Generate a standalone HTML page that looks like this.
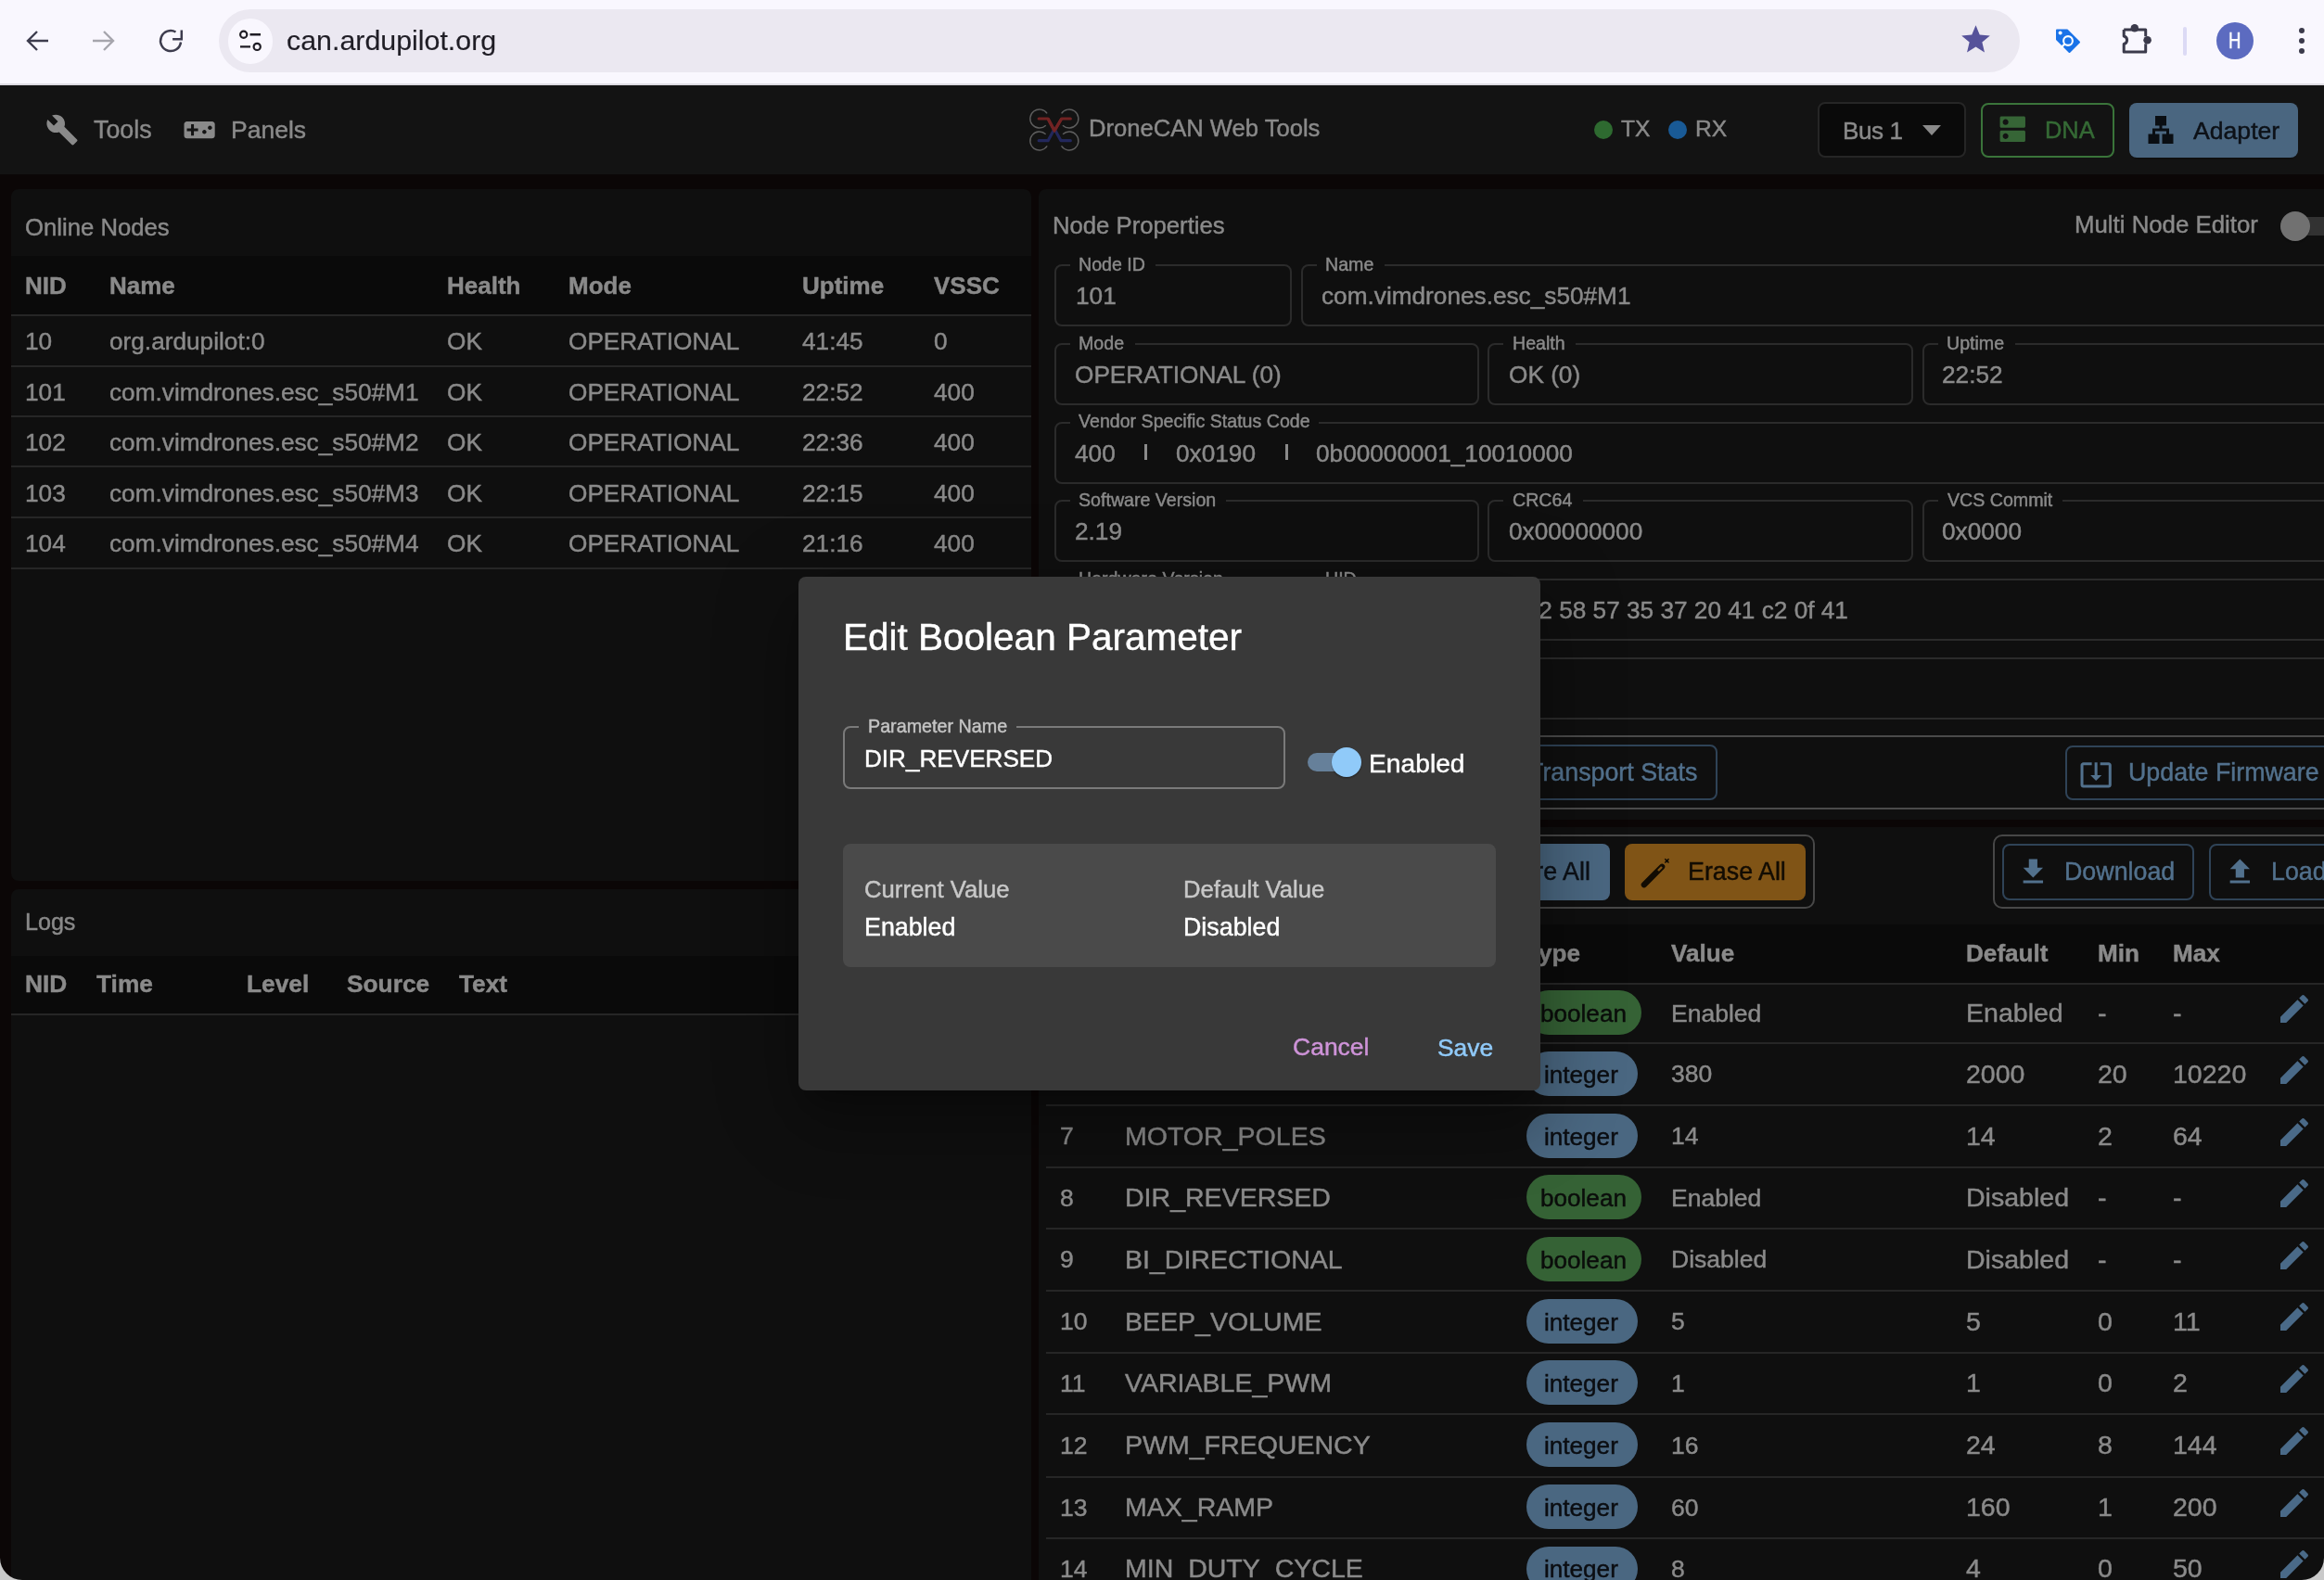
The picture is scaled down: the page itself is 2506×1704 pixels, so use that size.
<!DOCTYPE html>
<html><head><meta charset="utf-8"><title>DroneCAN Web Tools</title>
<style>
html,body{margin:0;padding:0;}
body{width:2506px;height:1704px;overflow:hidden;position:relative;background:#0b0606;font-family:"Liberation Sans", sans-serif;}
.t{position:absolute;white-space:nowrap;font-family:"Liberation Sans", sans-serif;-webkit-text-stroke:0.45px currentColor;will-change:transform;}
.r{position:absolute;}
</style></head><body>
<div class="r" style="left:0.0px;top:0.0px;width:2506.0px;height:91.0px;background:#f9f7fe;"></div><div class="r" style="left:0.0px;top:90.0px;width:2506.0px;height:2.0px;background:#dddbe2;"></div><svg class="r" style="left:26.0px;top:30.0px;" width="28.0" height="28.0" viewBox="0 0 28 28"><path d="M26 14H4M14 4L4 14l10 10" fill="none" stroke="#3d3c4e" stroke-width="2.4"/></svg><svg class="r" style="left:98.0px;top:30.0px;" width="28.0" height="28.0" viewBox="0 0 28 28"><path d="M2 14h22M14 4l10 10-10 10" fill="none" stroke="#a6a5ad" stroke-width="2.4"/></svg><svg class="r" style="left:170.0px;top:30.0px;" width="28.0" height="28.0" viewBox="0 0 28 28"><path d="M25 15.5A11 11 0 1 1 19.5 4.5" fill="none" stroke="#3d3c4e" stroke-width="2.5"/><path d="M25.8 2.5v9.7h-9.7" fill="none" stroke="#3d3c4e" stroke-width="2.5"/></svg><div class="r" style="left:236.0px;top:10.0px;width:1942.0px;height:68.0px;background:#ebe8f1;border-radius:34px"></div><div class="r" style="left:245.5px;top:20.0px;width:48.5px;height:48.5px;background:#f9f7fe;border-radius:50%"></div><svg class="r" style="left:256.0px;top:30.0px;" width="28.0" height="28.0" viewBox="0 0 28 28"><circle cx="6.7" cy="7.2" r="3.6" fill="none" stroke="#1f1d25" stroke-width="2.2"/><path d="M13.5 7.2h11.5M3 20.4h11" stroke="#1f1d25" stroke-width="2.4"/><circle cx="21.2" cy="20.4" r="3.6" fill="none" stroke="#1f1d25" stroke-width="2.2"/></svg><div class="t" style="left:309.4px;top:28.6px;font-size:30.36px;line-height:30.36px;color:#1f1d25;font-weight:400;-webkit-text-stroke:0.15px currentColor">can.ardupilot.org</div><svg class="r" style="left:2112.5px;top:24.3px;" width="35.0" height="35.0" viewBox="0 0 24 24"><path d="M12 2.2l2.9 7.1 7.6.6-5.8 4.9 1.8 7.4L12 18.2l-6.5 4 1.8-7.4-5.8-4.9 7.6-.6z" fill="#56529a"/></svg><svg class="r" style="left:2215.0px;top:29.0px;" width="30.0" height="30.0" viewBox="0 0 30 30"><path d="M3 3.5h11l13 13-10.5 10.5-13.5-13.5z" fill="#1a73e8" stroke="#1a73e8" stroke-width="2" stroke-linejoin="round"/><circle cx="6.6" cy="6.4" r="2" fill="#fff"/><circle cx="15" cy="15" r="4.9" fill="none" stroke="#fff" stroke-width="2.1"/><path d="M11.2 18.6L7.6 22.2" stroke="#fff" stroke-width="2.2"/></svg><svg class="r" style="left:2280.0px;top:20.0px;" width="44.0" height="44.0" viewBox="0 0 44 44"><path d="M10.2 12.1H33.7V19.2M33.7 27.2V36H10.2V27.4A4.3 4.3 0 0 0 10.2 19V12.1" fill="none" stroke="#3b3a4b" stroke-width="3" stroke-linejoin="round"/><circle cx="21.8" cy="10.3" r="4.2" fill="#3b3a4b"/><circle cx="35.6" cy="23.2" r="4.3" fill="#3b3a4b"/></svg><div class="r" style="left:2354.3px;top:28.5px;width:3.5px;height:31.0px;background:#dcdaf5;border-radius:2px"></div><div class="r" style="left:2390.0px;top:24.0px;width:40.0px;height:40.0px;background:#5c6bc0;border-radius:50%"></div><div class="t" style="left:2402.8px;top:32.7px;font-size:23.28px;line-height:23.28px;color:#ffffff;font-weight:400;transform:scaleX(0.8);transform-origin:0 0">H</div><div class="r" style="left:2479.0px;top:29.7px;width:6.0px;height:6.0px;background:#3b3a4b;border-radius:50%"></div><div class="r" style="left:2479.0px;top:41.0px;width:6.0px;height:6.0px;background:#3b3a4b;border-radius:50%"></div><div class="r" style="left:2479.0px;top:52.3px;width:6.0px;height:6.0px;background:#3b3a4b;border-radius:50%"></div><div class="r" style="left:0.0px;top:92.0px;width:2506.0px;height:96.0px;background:#131313;"></div><svg class="r" style="left:49.3px;top:121.7px;" width="36.0" height="36.0" viewBox="0 0 24 24"><path fill="#8a8a8a" d="M22.7 19l-9.1-9.1c.9-2.3.4-5-1.5-6.9-2-2-5-2.4-7.4-1.3L9 6 6 9 1.6 4.7C.4 7.1.9 10.1 2.9 12.1c1.9 1.9 4.6 2.4 6.9 1.5l9.1 9.1c.4.4 1 .4 1.4 0l2.3-2.3c.5-.4.5-1.1.1-1.4z"/></svg><div class="t" style="left:100.7px;top:126.9px;font-size:26.82px;line-height:26.82px;color:#8a8a8a;font-weight:400;">Tools</div><svg class="r" style="left:196.8px;top:122.3px;" width="36.2" height="36.2" viewBox="0 0 24 24"><path fill="#8a8a8a" d="M21 6H3c-1.1 0-2 .9-2 2v8c0 1.1.9 2 2 2h18c1.1 0 2-.9 2-2V8c0-1.1-.9-2-2-2zm-10 7H8v3H6v-3H3v-2h3V8h2v3h3v2zm4.5 2c-.83 0-1.5-.67-1.5-1.5s.67-1.5 1.5-1.5 1.5.67 1.5 1.5-.67 1.5-1.5 1.5zm4-3c-.83 0-1.5-.67-1.5-1.5S18.67 9 19.5 9s1.5.67 1.5 1.5-.67 1.5-1.5 1.5z"/></svg><div class="t" style="left:249.4px;top:127.1px;font-size:26.51px;line-height:26.51px;color:#8a8a8a;font-weight:400;">Panels</div><svg class="r" style="left:1106.0px;top:113.0px;" width="62.0" height="54.0" viewBox="0 0 62 54"><g fill="none" stroke="#5e5e5e" stroke-width="1.4"><path d="M21.75 22.19A10 10 0 1 1 23.09 9.41"/><path d="M38.61 9.41A10 10 0 1 1 39.95 22.19"/><path d="M23.19 44.45A10 10 0 1 1 21.62 31.69"/><path d="M40.08 31.69A10 10 0 1 1 38.51 44.45"/></g><path d="M14.200000000000045 15H24.09999999999991L31 28L38.700000000000045 15H48.299999999999955" fill="none" stroke="#722323" stroke-width="3.2" stroke-linecap="round" stroke-linejoin="round"/><path d="M14.200000000000045 38.69999999999999H24.09999999999991L31 26" fill="none" stroke="#23285c" stroke-width="3.2" stroke-linecap="round" stroke-linejoin="round"/><path d="M31 26L38 38.69999999999999H48.299999999999955" fill="none" stroke="#23285c" stroke-width="3.2" stroke-linecap="round" stroke-linejoin="round"/><path d="M24.09999999999991 15L31 28L38.700000000000045 15" fill="none" stroke="#722323" stroke-width="3.2" stroke-linejoin="round"/></svg><div class="t" style="left:1173.7px;top:126.4px;font-size:25.6px;line-height:25.6px;color:#8a8a8a;font-weight:400;">DroneCAN Web Tools</div><div class="r" style="left:1718.5px;top:130.0px;width:20.0px;height:20.0px;background:#2e6a30;border-radius:50%"></div><div class="t" style="left:1747.5px;top:127.2px;font-size:24.59px;line-height:24.59px;color:#8a8a8a;font-weight:400;">TX</div><div class="r" style="left:1798.6px;top:130.0px;width:20.0px;height:20.0px;background:#195a96;border-radius:50%"></div><div class="t" style="left:1827.6px;top:127.2px;font-size:24.59px;line-height:24.59px;color:#8a8a8a;font-weight:400;">RX</div><div class="r" style="left:1960.0px;top:109.5px;width:159.5px;height:60.0px;background:#0a0a0a;border:2px solid #262626;border-radius:8px;box-sizing:border-box"></div><div class="t" style="left:1986.7px;top:127.7px;font-size:26.11px;line-height:26.11px;color:#8a8a8a;font-weight:400;letter-spacing:-0.45px">Bus 1</div><svg class="r" style="left:2073.0px;top:135.0px;" width="20.0" height="11.0" viewBox="0 0 20 11"><path d="M0 0h20L10 11z" fill="#8a8a8a"/></svg><div class="r" style="left:2136.0px;top:110.5px;width:143.5px;height:59.0px;background:transparent;border:2px solid #3a743a;border-radius:8px;box-sizing:border-box"></div><svg class="r" style="left:2151.8px;top:121.3px;" width="36.5" height="36.5" viewBox="0 0 24 24"><path fill="#366536" d="M20 13H4c-.55 0-1 .45-1 1v6c0 .55.45 1 1 1h16c.55 0 1-.45 1-1v-6c0-.55-.45-1-1-1zM7 19c-1.1 0-2-.9-2-2s.9-2 2-2 2 .9 2 2-.9 2-2 2zM20 3H4c-.55 0-1 .45-1 1v6c0 .55.45 1 1 1h16c.55 0 1-.45 1-1V4c0-.55-.45-1-1-1zM7 9c-1.1 0-2-.9-2-2s.9-2 2-2 2 .9 2 2-.9 2-2 2z"/></svg><div class="t" style="left:2204.5px;top:127.6px;font-size:25.4px;line-height:25.4px;color:#356a35;font-weight:400;">DNA</div><div class="r" style="left:2296.0px;top:110.5px;width:182.0px;height:59.0px;background:#4a6680;border-radius:8px;box-shadow:0 3px 2px -2px rgba(0,0,0,.4)"></div><svg class="r" style="left:2312.0px;top:122.0px;" width="36.0" height="36.0" viewBox="0 0 24 24"><path fill="#0a0e13" d="M13 22h8v-7h-3v-4h-5V9h3V2H8v7h3v2H6v4H3v7h8v-7H8v-2h8v2h-3z"/></svg><div class="t" style="left:2364.9px;top:127.5px;font-size:26.62px;line-height:26.62px;color:#0d1117;font-weight:400;">Adapter</div><div class="r" style="left:0.0px;top:188.0px;width:2506.0px;height:1516.0px;background:#0b0606;"></div><div class="r" style="left:12.0px;top:204.0px;width:1100.0px;height:746.0px;background:#0f0f0f;border-radius:8px"></div><div class="t" style="left:26.7px;top:232.8px;font-size:25.7px;line-height:25.7px;color:#8a8a8a;font-weight:400;">Online Nodes</div><div class="r" style="left:12.0px;top:276.0px;width:1100.0px;height:63.0px;background:#0a0a0a;"></div><div class="t" style="left:26.7px;top:294.5px;font-size:26.01px;line-height:26.01px;color:#8a8a8a;font-weight:700;">NID</div><div class="t" style="left:117.5px;top:294.5px;font-size:26.01px;line-height:26.01px;color:#8a8a8a;font-weight:700;">Name</div><div class="t" style="left:481.7px;top:294.5px;font-size:26.01px;line-height:26.01px;color:#8a8a8a;font-weight:700;">Health</div><div class="t" style="left:612.7px;top:294.5px;font-size:26.01px;line-height:26.01px;color:#8a8a8a;font-weight:700;">Mode</div><div class="t" style="left:865.2px;top:294.5px;font-size:26.01px;line-height:26.01px;color:#8a8a8a;font-weight:700;">Uptime</div><div class="t" style="left:1006.5px;top:294.5px;font-size:26.01px;line-height:26.01px;color:#8a8a8a;font-weight:700;">VSSC</div><div class="r" style="left:12.0px;top:338.5px;width:1100.0px;height:2.0px;background:#262626;"></div><div class="r" style="left:12.0px;top:393.6px;width:1100.0px;height:2.0px;background:#262626;"></div><div class="r" style="left:12.0px;top:447.8px;width:1100.0px;height:2.0px;background:#262626;"></div><div class="r" style="left:12.0px;top:502.3px;width:1100.0px;height:2.0px;background:#262626;"></div><div class="r" style="left:12.0px;top:556.5px;width:1100.0px;height:2.0px;background:#262626;"></div><div class="r" style="left:12.0px;top:611.6px;width:1100.0px;height:2.0px;background:#262626;"></div><div class="t" style="left:26.7px;top:355.2px;font-size:26.21px;line-height:26.21px;color:#8a8a8a;font-weight:400;">10</div><div class="t" style="left:117.5px;top:355.2px;font-size:26.21px;line-height:26.21px;color:#8a8a8a;font-weight:400;">org.ardupilot:0</div><div class="t" style="left:481.7px;top:355.2px;font-size:26.21px;line-height:26.21px;color:#8a8a8a;font-weight:400;">OK</div><div class="t" style="left:612.7px;top:355.2px;font-size:26.21px;line-height:26.21px;color:#8a8a8a;font-weight:400;">OPERATIONAL</div><div class="t" style="left:865.2px;top:355.2px;font-size:26.21px;line-height:26.21px;color:#8a8a8a;font-weight:400;">41:45</div><div class="t" style="left:1006.5px;top:355.2px;font-size:26.21px;line-height:26.21px;color:#8a8a8a;font-weight:400;">0</div><div class="t" style="left:26.7px;top:409.7px;font-size:26.21px;line-height:26.21px;color:#8a8a8a;font-weight:400;">101</div><div class="t" style="left:117.5px;top:409.7px;font-size:26.21px;line-height:26.21px;color:#8a8a8a;font-weight:400;">com.vimdrones.esc_s50#M1</div><div class="t" style="left:481.7px;top:409.7px;font-size:26.21px;line-height:26.21px;color:#8a8a8a;font-weight:400;">OK</div><div class="t" style="left:612.7px;top:409.7px;font-size:26.21px;line-height:26.21px;color:#8a8a8a;font-weight:400;">OPERATIONAL</div><div class="t" style="left:865.2px;top:409.7px;font-size:26.21px;line-height:26.21px;color:#8a8a8a;font-weight:400;">22:52</div><div class="t" style="left:1006.5px;top:409.7px;font-size:26.21px;line-height:26.21px;color:#8a8a8a;font-weight:400;">400</div><div class="t" style="left:26.7px;top:464.0px;font-size:26.21px;line-height:26.21px;color:#8a8a8a;font-weight:400;">102</div><div class="t" style="left:117.5px;top:464.0px;font-size:26.21px;line-height:26.21px;color:#8a8a8a;font-weight:400;">com.vimdrones.esc_s50#M2</div><div class="t" style="left:481.7px;top:464.0px;font-size:26.21px;line-height:26.21px;color:#8a8a8a;font-weight:400;">OK</div><div class="t" style="left:612.7px;top:464.0px;font-size:26.21px;line-height:26.21px;color:#8a8a8a;font-weight:400;">OPERATIONAL</div><div class="t" style="left:865.2px;top:464.0px;font-size:26.21px;line-height:26.21px;color:#8a8a8a;font-weight:400;">22:36</div><div class="t" style="left:1006.5px;top:464.0px;font-size:26.21px;line-height:26.21px;color:#8a8a8a;font-weight:400;">400</div><div class="t" style="left:26.7px;top:518.6px;font-size:26.21px;line-height:26.21px;color:#8a8a8a;font-weight:400;">103</div><div class="t" style="left:117.5px;top:518.6px;font-size:26.21px;line-height:26.21px;color:#8a8a8a;font-weight:400;">com.vimdrones.esc_s50#M3</div><div class="t" style="left:481.7px;top:518.6px;font-size:26.21px;line-height:26.21px;color:#8a8a8a;font-weight:400;">OK</div><div class="t" style="left:612.7px;top:518.6px;font-size:26.21px;line-height:26.21px;color:#8a8a8a;font-weight:400;">OPERATIONAL</div><div class="t" style="left:865.2px;top:518.6px;font-size:26.21px;line-height:26.21px;color:#8a8a8a;font-weight:400;">22:15</div><div class="t" style="left:1006.5px;top:518.6px;font-size:26.21px;line-height:26.21px;color:#8a8a8a;font-weight:400;">400</div><div class="t" style="left:26.7px;top:572.8px;font-size:26.21px;line-height:26.21px;color:#8a8a8a;font-weight:400;">104</div><div class="t" style="left:117.5px;top:572.8px;font-size:26.21px;line-height:26.21px;color:#8a8a8a;font-weight:400;">com.vimdrones.esc_s50#M4</div><div class="t" style="left:481.7px;top:572.8px;font-size:26.21px;line-height:26.21px;color:#8a8a8a;font-weight:400;">OK</div><div class="t" style="left:612.7px;top:572.8px;font-size:26.21px;line-height:26.21px;color:#8a8a8a;font-weight:400;">OPERATIONAL</div><div class="t" style="left:865.2px;top:572.8px;font-size:26.21px;line-height:26.21px;color:#8a8a8a;font-weight:400;">21:16</div><div class="t" style="left:1006.5px;top:572.8px;font-size:26.21px;line-height:26.21px;color:#8a8a8a;font-weight:400;">400</div><div class="r" style="left:12.0px;top:959.4px;width:1100.0px;height:784.6px;background:#0f0f0f;border-radius:8px"></div><div class="t" style="left:26.8px;top:982.3px;font-size:25.1px;line-height:25.1px;color:#8a8a8a;font-weight:400;">Logs</div><div class="r" style="left:12.0px;top:1030.6px;width:1100.0px;height:63.4px;background:#0a0a0a;"></div><div class="t" style="left:27.1px;top:1048.3px;font-size:26.31px;line-height:26.31px;color:#8a8a8a;font-weight:700;">NID</div><div class="t" style="left:103.7px;top:1048.3px;font-size:26.31px;line-height:26.31px;color:#8a8a8a;font-weight:700;">Time</div><div class="t" style="left:265.7px;top:1048.3px;font-size:26.31px;line-height:26.31px;color:#8a8a8a;font-weight:700;">Level</div><div class="t" style="left:374.3px;top:1048.3px;font-size:26.31px;line-height:26.31px;color:#8a8a8a;font-weight:700;">Source</div><div class="t" style="left:494.7px;top:1048.3px;font-size:26.31px;line-height:26.31px;color:#8a8a8a;font-weight:700;">Text</div><div class="r" style="left:12.0px;top:1093.0px;width:1100.0px;height:2.0px;background:#262626;"></div><div class="r" style="left:1120.0px;top:204.0px;width:1500.0px;height:680.0px;background:#0f0f0f;border-radius:8px"></div><div class="t" style="left:1135.3px;top:230.6px;font-size:25.7px;line-height:25.7px;color:#8a8a8a;font-weight:400;">Node Properties</div><div class="t" style="left:2236.7px;top:230.3px;font-size:25.81px;line-height:25.81px;color:#8a8a8a;font-weight:400;">Multi Node Editor</div><div class="r" style="left:2459.0px;top:234.0px;width:70.0px;height:20.0px;background:#323232;border-radius:10px"></div><div class="r" style="left:2459.0px;top:228.0px;width:32.0px;height:32.0px;background:#717171;border-radius:50%;box-shadow:0 2px 2px -1px rgba(0,0,0,.5)"></div><div class="r" style="left:1136.6px;top:285.0px;width:256.6px;height:67.0px;background:transparent;border:2px solid #2b2b2b;border-radius:8px;box-sizing:border-box"></div><div class="r" style="left:1153.7px;top:283.0px;width:92.8px;height:5.0px;background:#0f0f0f;"></div><div class="t" style="left:1163.3px;top:275.7px;font-size:19.63px;line-height:19.63px;color:#8a8a8a;font-weight:400;">Node ID</div><div class="t" style="left:1160.0px;top:305.9px;font-size:26.21px;line-height:26.21px;color:#8a8a8a;font-weight:400;">101</div><div class="r" style="left:1402.5px;top:285.0px;width:1217.5px;height:67.0px;background:transparent;border:2px solid #2b2b2b;border-radius:8px;box-sizing:border-box"></div><div class="r" style="left:1419.6px;top:283.0px;width:73.4px;height:5.0px;background:#0f0f0f;"></div><div class="t" style="left:1429.2px;top:275.7px;font-size:19.63px;line-height:19.63px;color:#8a8a8a;font-weight:400;">Name</div><div class="t" style="left:1425.0px;top:305.9px;font-size:26.21px;line-height:26.21px;color:#8a8a8a;font-weight:400;">com.vimdrones.esc_s50#M1</div><div class="r" style="left:1136.6px;top:370.2px;width:458.7px;height:67.0px;background:transparent;border:2px solid #2b2b2b;border-radius:8px;box-sizing:border-box"></div><div class="r" style="left:1153.7px;top:368.2px;width:70.1px;height:5.0px;background:#0f0f0f;"></div><div class="t" style="left:1163.3px;top:360.9px;font-size:19.63px;line-height:19.63px;color:#8a8a8a;font-weight:400;">Mode</div><div class="t" style="left:1158.7px;top:391.1px;font-size:26.21px;line-height:26.21px;color:#8a8a8a;font-weight:400;">OPERATIONAL (0)</div><div class="r" style="left:1604.3px;top:370.2px;width:458.7px;height:67.0px;background:transparent;border:2px solid #2b2b2b;border-radius:8px;box-sizing:border-box"></div><div class="r" style="left:1621.4px;top:368.2px;width:77.7px;height:5.0px;background:#0f0f0f;"></div><div class="t" style="left:1631.0px;top:360.9px;font-size:19.63px;line-height:19.63px;color:#8a8a8a;font-weight:400;">Health</div><div class="t" style="left:1626.8px;top:391.1px;font-size:26.21px;line-height:26.21px;color:#8a8a8a;font-weight:400;">OK (0)</div><div class="r" style="left:2072.5px;top:370.2px;width:547.5px;height:67.0px;background:transparent;border:2px solid #2b2b2b;border-radius:8px;box-sizing:border-box"></div><div class="r" style="left:2089.6px;top:368.2px;width:83.1px;height:5.0px;background:#0f0f0f;"></div><div class="t" style="left:2099.2px;top:360.9px;font-size:19.63px;line-height:19.63px;color:#8a8a8a;font-weight:400;">Uptime</div><div class="t" style="left:2094.0px;top:391.1px;font-size:26.21px;line-height:26.21px;color:#8a8a8a;font-weight:400;">22:52</div><div class="r" style="left:1136.6px;top:454.5px;width:1483.4px;height:67.0px;background:transparent;border:2px solid #2b2b2b;border-radius:8px;box-sizing:border-box"></div><div class="r" style="left:1153.7px;top:452.5px;width:268.6px;height:5.0px;background:#0f0f0f;"></div><div class="t" style="left:1163.3px;top:445.2px;font-size:19.63px;line-height:19.63px;color:#8a8a8a;font-weight:400;">Vendor Specific Status Code</div><div class="t" style="left:1158.7px;top:475.6px;font-size:26.21px;line-height:26.21px;color:#8a8a8a;font-weight:400;">400</div><div class="r" style="left:1234.3px;top:479.3px;width:3.0px;height:17.0px;background:#8a8a8a;"></div><div class="t" style="left:1268.4px;top:475.6px;font-size:26.21px;line-height:26.21px;color:#8a8a8a;font-weight:400;">0x0190</div><div class="r" style="left:1385.6px;top:479.3px;width:3.0px;height:17.0px;background:#8a8a8a;"></div><div class="t" style="left:1419.0px;top:475.6px;font-size:26.21px;line-height:26.21px;color:#8a8a8a;font-weight:400;">0b00000001_10010000</div><div class="r" style="left:1136.6px;top:539.0px;width:458.7px;height:67.0px;background:transparent;border:2px solid #2b2b2b;border-radius:8px;box-sizing:border-box"></div><div class="r" style="left:1153.7px;top:537.0px;width:168.3px;height:5.0px;background:#0f0f0f;"></div><div class="t" style="left:1163.3px;top:529.7px;font-size:19.63px;line-height:19.63px;color:#8a8a8a;font-weight:400;">Software Version</div><div class="t" style="left:1158.7px;top:559.9px;font-size:26.21px;line-height:26.21px;color:#8a8a8a;font-weight:400;">2.19</div><div class="r" style="left:1604.3px;top:539.0px;width:458.7px;height:67.0px;background:transparent;border:2px solid #2b2b2b;border-radius:8px;box-sizing:border-box"></div><div class="r" style="left:1621.4px;top:537.0px;width:85.2px;height:5.0px;background:#0f0f0f;"></div><div class="t" style="left:1631.0px;top:529.7px;font-size:19.63px;line-height:19.63px;color:#8a8a8a;font-weight:400;">CRC64</div><div class="t" style="left:1626.7px;top:559.9px;font-size:26.21px;line-height:26.21px;color:#8a8a8a;font-weight:400;">0x00000000</div><div class="r" style="left:2072.8px;top:539.0px;width:547.2px;height:67.0px;background:transparent;border:2px solid #2b2b2b;border-radius:8px;box-sizing:border-box"></div><div class="r" style="left:2089.9px;top:537.0px;width:133.7px;height:5.0px;background:#0f0f0f;"></div><div class="t" style="left:2099.5px;top:529.7px;font-size:19.63px;line-height:19.63px;color:#8a8a8a;font-weight:400;">VCS Commit</div><div class="t" style="left:2094.4px;top:559.9px;font-size:26.21px;line-height:26.21px;color:#8a8a8a;font-weight:400;">0x0000</div><div class="r" style="left:1136.6px;top:624.0px;width:256.6px;height:67.0px;background:transparent;border:2px solid #2b2b2b;border-radius:8px;box-sizing:border-box"></div><div class="r" style="left:1153.7px;top:622.0px;width:175.8px;height:5.0px;background:#0f0f0f;"></div><div class="t" style="left:1163.3px;top:614.7px;font-size:19.63px;line-height:19.63px;color:#8a8a8a;font-weight:400;">Hardware Version</div><div class="t" style="left:1158.7px;top:644.9px;font-size:26.21px;line-height:26.21px;color:#8a8a8a;font-weight:400;">1.0</div><div class="r" style="left:1402.5px;top:624.0px;width:1217.5px;height:67.0px;background:transparent;border:2px solid #2b2b2b;border-radius:8px;box-sizing:border-box"></div><div class="r" style="left:1419.6px;top:622.0px;width:55.0px;height:5.0px;background:#0f0f0f;"></div><div class="t" style="left:1429.2px;top:614.7px;font-size:19.63px;line-height:19.63px;color:#8a8a8a;font-weight:400;">UID</div><div class="t" style="left:1498.5px;top:644.9px;font-size:26.21px;line-height:26.21px;color:#8a8a8a;font-weight:400;">39 00 27 00 02 58 57 35 37 20 41 c2 0f 41</div><div class="r" style="left:1136.6px;top:708.6px;width:1483.4px;height:67.0px;background:transparent;border:2px solid #2b2b2b;border-radius:8px;box-sizing:border-box"></div><div class="r" style="left:1136.6px;top:793.4px;width:1500.0px;height:79.6px;background:transparent;border:2px solid #4a4a4a;border-radius:10px;box-sizing:border-box"></div><div class="r" style="left:1521.0px;top:802.8px;width:331.0px;height:60.0px;background:transparent;border:2px solid #2f4357;border-radius:8px;box-sizing:border-box"></div><div class="t" style="left:1647.5px;top:820.2px;font-size:26.82px;line-height:26.82px;color:#52718d;font-weight:400;">Transport Stats</div><div class="r" style="left:2227.4px;top:803.6px;width:400.0px;height:59.0px;background:transparent;border:2px solid #2f4357;border-radius:8px;box-sizing:border-box"></div><svg class="r" style="left:2242.2px;top:817.0px;" width="36.3" height="36.3" viewBox="0 0 24 24"><path fill="#52718d" d="M12 16.5l4-4h-3v-9h-2v9H8l4 4zm9-13h-6v1.99h6v14.03H3V5.49h6V3.5H3c-1.1 0-2 .9-2 2v14c0 1.1.9 2 2 2h18c1.1 0 2-.9 2-2v-14c0-1.1-.9-2-2-2z"/></svg><div class="t" style="left:2295.2px;top:819.7px;font-size:26.82px;line-height:26.82px;color:#52718d;font-weight:400;">Update Firmware</div><div class="r" style="left:1120.0px;top:892.0px;width:1500.0px;height:852.0px;background:#0f0f0f;border-radius:8px"></div><div class="r" style="left:1136.6px;top:899.8px;width:820.0px;height:80.7px;background:transparent;border:2px solid #474747;border-radius:10px;box-sizing:border-box"></div><div class="r" style="left:1500.0px;top:910.3px;width:235.5px;height:60.3px;background:#4a6781;border-radius:8px"></div><div class="t" style="left:1614.5px;top:927.2px;font-size:26.82px;line-height:26.82px;color:#0d1117;font-weight:400;">Store All</div><div class="r" style="left:1752.0px;top:910.3px;width:195.0px;height:60.3px;background:#805416;border-radius:8px"></div><svg class="r" style="left:1767.0px;top:921.0px;" width="38.0" height="38.0" viewBox="0 0 38 38"><path d="M5.8 33.2L25.2 13.8" stroke="#120c03" stroke-width="6.2" stroke-linecap="round"/><path d="M21 18l4-4" stroke="#805416" stroke-width="2.4"/><path d="M28.3 5.3l4.2 4.2M32.5 5.3l-4.2 4.2" stroke="#120c03" stroke-width="1.6"/><circle cx="30.4" cy="7.4" r="1.3" fill="#120c03"/></svg><div class="t" style="left:1820.1px;top:927.0px;font-size:26.82px;line-height:26.82px;color:#120c03;font-weight:400;">Erase All</div><div class="r" style="left:2149.4px;top:899.8px;width:500.0px;height:80.7px;background:transparent;border:2px solid #474747;border-radius:10px;box-sizing:border-box"></div><div class="r" style="left:2159.2px;top:910.3px;width:206.5px;height:60.3px;background:transparent;border:2px solid #2f4357;border-radius:8px;box-sizing:border-box"></div><svg class="r" style="left:2173.5px;top:921.5px;" width="36.7" height="36.7" viewBox="0 0 24 24"><path fill="#52718d" d="M19 9h-4V3H9v6H5l7 7 7-7zM5 18v2h14v-2H5z"/></svg><div class="t" style="left:2226.1px;top:927.2px;font-size:26.82px;line-height:26.82px;color:#52718d;font-weight:400;">Download</div><div class="r" style="left:2382.2px;top:910.3px;width:300.0px;height:60.3px;background:transparent;border:2px solid #2f4357;border-radius:8px;box-sizing:border-box"></div><svg class="r" style="left:2397.0px;top:921.5px;" width="36.7" height="36.7" viewBox="0 0 24 24"><path fill="#52718d" d="M9 16h6v-6h4l-7-7-7 7h4zm-4 2h14v2H5z"/></svg><div class="t" style="left:2448.9px;top:927.2px;font-size:26.82px;line-height:26.82px;color:#52718d;font-weight:400;">Load</div><div class="r" style="left:1128.0px;top:996.6px;width:1500.0px;height:64.5px;background:#0a0a0a;"></div><div class="t" style="left:1142.7px;top:1015.3px;font-size:26.11px;line-height:26.11px;color:#8a8a8a;font-weight:700;">#</div><div class="t" style="left:1213.0px;top:1015.3px;font-size:26.11px;line-height:26.11px;color:#8a8a8a;font-weight:700;">Name</div><div class="t" style="left:1644.9px;top:1015.3px;font-size:26.11px;line-height:26.11px;color:#8a8a8a;font-weight:700;">Type</div><div class="t" style="left:1801.6px;top:1015.3px;font-size:26.11px;line-height:26.11px;color:#8a8a8a;font-weight:700;">Value</div><div class="t" style="left:2119.7px;top:1015.3px;font-size:26.11px;line-height:26.11px;color:#8a8a8a;font-weight:700;">Default</div><div class="t" style="left:2262.0px;top:1015.3px;font-size:26.11px;line-height:26.11px;color:#8a8a8a;font-weight:700;">Min</div><div class="t" style="left:2342.6px;top:1015.3px;font-size:26.11px;line-height:26.11px;color:#8a8a8a;font-weight:700;">Max</div><div class="r" style="left:1128.0px;top:1060.1px;width:1500.0px;height:2.0px;background:#262626;"></div><div class="r" style="left:1128.0px;top:1123.9px;width:1500.0px;height:2.0px;background:#262626;"></div><div class="r" style="left:1128.0px;top:1191.0px;width:1500.0px;height:2.0px;background:#262626;"></div><div class="r" style="left:1128.0px;top:1257.9px;width:1500.0px;height:2.0px;background:#262626;"></div><div class="r" style="left:1128.0px;top:1324.1px;width:1500.0px;height:2.0px;background:#262626;"></div><div class="r" style="left:1128.0px;top:1391.3px;width:1500.0px;height:2.0px;background:#262626;"></div><div class="r" style="left:1128.0px;top:1457.6px;width:1500.0px;height:2.0px;background:#262626;"></div><div class="r" style="left:1128.0px;top:1524.4px;width:1500.0px;height:2.0px;background:#262626;"></div><div class="r" style="left:1128.0px;top:1591.6px;width:1500.0px;height:2.0px;background:#262626;"></div><div class="r" style="left:1128.0px;top:1657.9px;width:1500.0px;height:2.0px;background:#262626;"></div><div class="r" style="left:1128.0px;top:1724.8px;width:1500.0px;height:2.0px;background:#262626;"></div><div class="t" style="left:1142.7px;top:1079.7px;font-size:26.51px;line-height:26.51px;color:#8a8a8a;font-weight:400;">5</div><div class="t" style="left:1212.9px;top:1078.1px;font-size:28.54px;line-height:28.54px;color:#8a8a8a;font-weight:400;">TELEM_RATE</div><div class="r" style="left:1646.2px;top:1068.3px;width:123.8px;height:48.0px;background:#356235;border-radius:24px"></div><div class="t" style="left:1660.7px;top:1080.1px;font-size:26.11px;line-height:26.11px;color:#0b0d0b;font-weight:400;">boolean</div><div class="t" style="left:1801.6px;top:1079.7px;font-size:26.51px;line-height:26.51px;color:#8a8a8a;font-weight:400;">Enabled</div><div class="t" style="left:2119.6px;top:1078.1px;font-size:28.54px;line-height:28.54px;color:#8a8a8a;font-weight:400;">Enabled</div><div class="t" style="left:2261.9px;top:1078.1px;font-size:28.54px;line-height:28.54px;color:#8a8a8a;font-weight:400;">-</div><div class="t" style="left:2342.5px;top:1078.1px;font-size:28.54px;line-height:28.54px;color:#8a8a8a;font-weight:400;">-</div><svg class="r" style="left:2453.5px;top:1068.0px;" width="40.0" height="40.0" viewBox="0 0 24 24"><path fill="#4a6a88" d="M3 17.25V21h3.75L17.81 9.94l-3.75-3.75L3 17.25zM20.71 7.04c.39-.39.39-1.02 0-1.41l-2.34-2.34a.9959.9959 0 0 0-1.41 0l-1.83 1.83 3.75 3.75 1.83-1.83z"/></svg><div class="t" style="left:1142.7px;top:1145.2px;font-size:26.51px;line-height:26.51px;color:#8a8a8a;font-weight:400;">6</div><div class="t" style="left:1212.9px;top:1143.5px;font-size:28.54px;line-height:28.54px;color:#8a8a8a;font-weight:400;">MOTOR_KV</div><div class="r" style="left:1646.2px;top:1133.8px;width:119.5px;height:48.0px;background:#4a6781;border-radius:24px"></div><div class="t" style="left:1664.7px;top:1145.5px;font-size:26.11px;line-height:26.11px;color:#0b0d11;font-weight:400;">integer</div><div class="t" style="left:1801.6px;top:1145.2px;font-size:26.51px;line-height:26.51px;color:#8a8a8a;font-weight:400;">380</div><div class="t" style="left:2119.6px;top:1143.5px;font-size:28.54px;line-height:28.54px;color:#8a8a8a;font-weight:400;">2000</div><div class="t" style="left:2261.9px;top:1143.5px;font-size:28.54px;line-height:28.54px;color:#8a8a8a;font-weight:400;">20</div><div class="t" style="left:2342.5px;top:1143.5px;font-size:28.54px;line-height:28.54px;color:#8a8a8a;font-weight:400;">10220</div><svg class="r" style="left:2453.5px;top:1133.5px;" width="40.0" height="40.0" viewBox="0 0 24 24"><path fill="#4a6a88" d="M3 17.25V21h3.75L17.81 9.94l-3.75-3.75L3 17.25zM20.71 7.04c.39-.39.39-1.02 0-1.41l-2.34-2.34a.9959.9959 0 0 0-1.41 0l-1.83 1.83 3.75 3.75 1.83-1.83z"/></svg><div class="t" style="left:1142.7px;top:1212.2px;font-size:26.51px;line-height:26.51px;color:#8a8a8a;font-weight:400;">7</div><div class="t" style="left:1212.9px;top:1210.5px;font-size:28.54px;line-height:28.54px;color:#8a8a8a;font-weight:400;">MOTOR_POLES</div><div class="r" style="left:1646.2px;top:1200.8px;width:119.5px;height:48.0px;background:#4a6781;border-radius:24px"></div><div class="t" style="left:1664.7px;top:1212.5px;font-size:26.11px;line-height:26.11px;color:#0b0d11;font-weight:400;">integer</div><div class="t" style="left:1801.6px;top:1212.2px;font-size:26.51px;line-height:26.51px;color:#8a8a8a;font-weight:400;">14</div><div class="t" style="left:2119.6px;top:1210.5px;font-size:28.54px;line-height:28.54px;color:#8a8a8a;font-weight:400;">14</div><div class="t" style="left:2261.9px;top:1210.5px;font-size:28.54px;line-height:28.54px;color:#8a8a8a;font-weight:400;">2</div><div class="t" style="left:2342.5px;top:1210.5px;font-size:28.54px;line-height:28.54px;color:#8a8a8a;font-weight:400;">64</div><svg class="r" style="left:2453.5px;top:1200.5px;" width="40.0" height="40.0" viewBox="0 0 24 24"><path fill="#4a6a88" d="M3 17.25V21h3.75L17.81 9.94l-3.75-3.75L3 17.25zM20.71 7.04c.39-.39.39-1.02 0-1.41l-2.34-2.34a.9959.9959 0 0 0-1.41 0l-1.83 1.83 3.75 3.75 1.83-1.83z"/></svg><div class="t" style="left:1142.7px;top:1278.7px;font-size:26.51px;line-height:26.51px;color:#8a8a8a;font-weight:400;">8</div><div class="t" style="left:1212.9px;top:1277.1px;font-size:28.54px;line-height:28.54px;color:#8a8a8a;font-weight:400;">DIR_REVERSED</div><div class="r" style="left:1646.2px;top:1267.3px;width:123.8px;height:48.0px;background:#356235;border-radius:24px"></div><div class="t" style="left:1660.7px;top:1279.1px;font-size:26.11px;line-height:26.11px;color:#0b0d0b;font-weight:400;">boolean</div><div class="t" style="left:1801.6px;top:1278.7px;font-size:26.51px;line-height:26.51px;color:#8a8a8a;font-weight:400;">Enabled</div><div class="t" style="left:2119.6px;top:1277.1px;font-size:28.54px;line-height:28.54px;color:#8a8a8a;font-weight:400;">Disabled</div><div class="t" style="left:2261.9px;top:1277.1px;font-size:28.54px;line-height:28.54px;color:#8a8a8a;font-weight:400;">-</div><div class="t" style="left:2342.5px;top:1277.1px;font-size:28.54px;line-height:28.54px;color:#8a8a8a;font-weight:400;">-</div><svg class="r" style="left:2453.5px;top:1267.0px;" width="40.0" height="40.0" viewBox="0 0 24 24"><path fill="#4a6a88" d="M3 17.25V21h3.75L17.81 9.94l-3.75-3.75L3 17.25zM20.71 7.04c.39-.39.39-1.02 0-1.41l-2.34-2.34a.9959.9959 0 0 0-1.41 0l-1.83 1.83 3.75 3.75 1.83-1.83z"/></svg><div class="t" style="left:1142.7px;top:1345.4px;font-size:26.51px;line-height:26.51px;color:#8a8a8a;font-weight:400;">9</div><div class="t" style="left:1212.9px;top:1343.8px;font-size:28.54px;line-height:28.54px;color:#8a8a8a;font-weight:400;">BI_DIRECTIONAL</div><div class="r" style="left:1646.2px;top:1334.0px;width:123.8px;height:48.0px;background:#356235;border-radius:24px"></div><div class="t" style="left:1660.7px;top:1345.8px;font-size:26.11px;line-height:26.11px;color:#0b0d0b;font-weight:400;">boolean</div><div class="t" style="left:1801.6px;top:1345.4px;font-size:26.51px;line-height:26.51px;color:#8a8a8a;font-weight:400;">Disabled</div><div class="t" style="left:2119.6px;top:1343.8px;font-size:28.54px;line-height:28.54px;color:#8a8a8a;font-weight:400;">Disabled</div><div class="t" style="left:2261.9px;top:1343.8px;font-size:28.54px;line-height:28.54px;color:#8a8a8a;font-weight:400;">-</div><div class="t" style="left:2342.5px;top:1343.8px;font-size:28.54px;line-height:28.54px;color:#8a8a8a;font-weight:400;">-</div><svg class="r" style="left:2453.5px;top:1333.7px;" width="40.0" height="40.0" viewBox="0 0 24 24"><path fill="#4a6a88" d="M3 17.25V21h3.75L17.81 9.94l-3.75-3.75L3 17.25zM20.71 7.04c.39-.39.39-1.02 0-1.41l-2.34-2.34a.9959.9959 0 0 0-1.41 0l-1.83 1.83 3.75 3.75 1.83-1.83z"/></svg><div class="t" style="left:1142.7px;top:1412.2px;font-size:26.51px;line-height:26.51px;color:#8a8a8a;font-weight:400;">10</div><div class="t" style="left:1212.9px;top:1410.5px;font-size:28.54px;line-height:28.54px;color:#8a8a8a;font-weight:400;">BEEP_VOLUME</div><div class="r" style="left:1646.2px;top:1400.7px;width:119.5px;height:48.0px;background:#4a6781;border-radius:24px"></div><div class="t" style="left:1664.7px;top:1412.5px;font-size:26.11px;line-height:26.11px;color:#0b0d11;font-weight:400;">integer</div><div class="t" style="left:1801.6px;top:1412.2px;font-size:26.51px;line-height:26.51px;color:#8a8a8a;font-weight:400;">5</div><div class="t" style="left:2119.6px;top:1410.5px;font-size:28.54px;line-height:28.54px;color:#8a8a8a;font-weight:400;">5</div><div class="t" style="left:2261.9px;top:1410.5px;font-size:28.54px;line-height:28.54px;color:#8a8a8a;font-weight:400;">0</div><div class="t" style="left:2342.5px;top:1410.5px;font-size:28.54px;line-height:28.54px;color:#8a8a8a;font-weight:400;">11</div><svg class="r" style="left:2453.5px;top:1400.4px;" width="40.0" height="40.0" viewBox="0 0 24 24"><path fill="#4a6a88" d="M3 17.25V21h3.75L17.81 9.94l-3.75-3.75L3 17.25zM20.71 7.04c.39-.39.39-1.02 0-1.41l-2.34-2.34a.9959.9959 0 0 0-1.41 0l-1.83 1.83 3.75 3.75 1.83-1.83z"/></svg><div class="t" style="left:1142.7px;top:1478.7px;font-size:26.51px;line-height:26.51px;color:#8a8a8a;font-weight:400;">11</div><div class="t" style="left:1212.9px;top:1477.1px;font-size:28.54px;line-height:28.54px;color:#8a8a8a;font-weight:400;">VARIABLE_PWM</div><div class="r" style="left:1646.2px;top:1467.3px;width:119.5px;height:48.0px;background:#4a6781;border-radius:24px"></div><div class="t" style="left:1664.7px;top:1479.1px;font-size:26.11px;line-height:26.11px;color:#0b0d11;font-weight:400;">integer</div><div class="t" style="left:1801.6px;top:1478.7px;font-size:26.51px;line-height:26.51px;color:#8a8a8a;font-weight:400;">1</div><div class="t" style="left:2119.6px;top:1477.1px;font-size:28.54px;line-height:28.54px;color:#8a8a8a;font-weight:400;">1</div><div class="t" style="left:2261.9px;top:1477.1px;font-size:28.54px;line-height:28.54px;color:#8a8a8a;font-weight:400;">0</div><div class="t" style="left:2342.5px;top:1477.1px;font-size:28.54px;line-height:28.54px;color:#8a8a8a;font-weight:400;">2</div><svg class="r" style="left:2453.5px;top:1467.0px;" width="40.0" height="40.0" viewBox="0 0 24 24"><path fill="#4a6a88" d="M3 17.25V21h3.75L17.81 9.94l-3.75-3.75L3 17.25zM20.71 7.04c.39-.39.39-1.02 0-1.41l-2.34-2.34a.9959.9959 0 0 0-1.41 0l-1.83 1.83 3.75 3.75 1.83-1.83z"/></svg><div class="t" style="left:1142.7px;top:1545.7px;font-size:26.51px;line-height:26.51px;color:#8a8a8a;font-weight:400;">12</div><div class="t" style="left:1212.9px;top:1544.1px;font-size:28.54px;line-height:28.54px;color:#8a8a8a;font-weight:400;">PWM_FREQUENCY</div><div class="r" style="left:1646.2px;top:1534.3px;width:119.5px;height:48.0px;background:#4a6781;border-radius:24px"></div><div class="t" style="left:1664.7px;top:1546.1px;font-size:26.11px;line-height:26.11px;color:#0b0d11;font-weight:400;">integer</div><div class="t" style="left:1801.6px;top:1545.7px;font-size:26.51px;line-height:26.51px;color:#8a8a8a;font-weight:400;">16</div><div class="t" style="left:2119.6px;top:1544.1px;font-size:28.54px;line-height:28.54px;color:#8a8a8a;font-weight:400;">24</div><div class="t" style="left:2261.9px;top:1544.1px;font-size:28.54px;line-height:28.54px;color:#8a8a8a;font-weight:400;">8</div><div class="t" style="left:2342.5px;top:1544.1px;font-size:28.54px;line-height:28.54px;color:#8a8a8a;font-weight:400;">144</div><svg class="r" style="left:2453.5px;top:1534.0px;" width="40.0" height="40.0" viewBox="0 0 24 24"><path fill="#4a6a88" d="M3 17.25V21h3.75L17.81 9.94l-3.75-3.75L3 17.25zM20.71 7.04c.39-.39.39-1.02 0-1.41l-2.34-2.34a.9959.9959 0 0 0-1.41 0l-1.83 1.83 3.75 3.75 1.83-1.83z"/></svg><div class="t" style="left:1142.7px;top:1612.5px;font-size:26.51px;line-height:26.51px;color:#8a8a8a;font-weight:400;">13</div><div class="t" style="left:1212.9px;top:1610.8px;font-size:28.54px;line-height:28.54px;color:#8a8a8a;font-weight:400;">MAX_RAMP</div><div class="r" style="left:1646.2px;top:1601.0px;width:119.5px;height:48.0px;background:#4a6781;border-radius:24px"></div><div class="t" style="left:1664.7px;top:1612.8px;font-size:26.11px;line-height:26.11px;color:#0b0d11;font-weight:400;">integer</div><div class="t" style="left:1801.6px;top:1612.5px;font-size:26.51px;line-height:26.51px;color:#8a8a8a;font-weight:400;">60</div><div class="t" style="left:2119.6px;top:1610.8px;font-size:28.54px;line-height:28.54px;color:#8a8a8a;font-weight:400;">160</div><div class="t" style="left:2261.9px;top:1610.8px;font-size:28.54px;line-height:28.54px;color:#8a8a8a;font-weight:400;">1</div><div class="t" style="left:2342.5px;top:1610.8px;font-size:28.54px;line-height:28.54px;color:#8a8a8a;font-weight:400;">200</div><svg class="r" style="left:2453.5px;top:1600.8px;" width="40.0" height="40.0" viewBox="0 0 24 24"><path fill="#4a6a88" d="M3 17.25V21h3.75L17.81 9.94l-3.75-3.75L3 17.25zM20.71 7.04c.39-.39.39-1.02 0-1.41l-2.34-2.34a.9959.9959 0 0 0-1.41 0l-1.83 1.83 3.75 3.75 1.83-1.83z"/></svg><div class="t" style="left:1142.7px;top:1679.1px;font-size:26.51px;line-height:26.51px;color:#8a8a8a;font-weight:400;">14</div><div class="t" style="left:1212.9px;top:1677.4px;font-size:28.54px;line-height:28.54px;color:#8a8a8a;font-weight:400;">MIN_DUTY_CYCLE</div><div class="r" style="left:1646.2px;top:1667.6px;width:119.5px;height:48.0px;background:#4a6781;border-radius:24px"></div><div class="t" style="left:1664.7px;top:1679.4px;font-size:26.11px;line-height:26.11px;color:#0b0d11;font-weight:400;">integer</div><div class="t" style="left:1801.6px;top:1679.1px;font-size:26.51px;line-height:26.51px;color:#8a8a8a;font-weight:400;">8</div><div class="t" style="left:2119.6px;top:1677.4px;font-size:28.54px;line-height:28.54px;color:#8a8a8a;font-weight:400;">4</div><div class="t" style="left:2261.9px;top:1677.4px;font-size:28.54px;line-height:28.54px;color:#8a8a8a;font-weight:400;">0</div><div class="t" style="left:2342.5px;top:1677.4px;font-size:28.54px;line-height:28.54px;color:#8a8a8a;font-weight:400;">50</div><svg class="r" style="left:2453.5px;top:1667.3px;" width="40.0" height="40.0" viewBox="0 0 24 24"><path fill="#4a6a88" d="M3 17.25V21h3.75L17.81 9.94l-3.75-3.75L3 17.25zM20.71 7.04c.39-.39.39-1.02 0-1.41l-2.34-2.34a.9959.9959 0 0 0-1.41 0l-1.83 1.83 3.75 3.75 1.83-1.83z"/></svg><div class="r" style="left:861.3px;top:622.3px;width:799.5px;height:553.5px;background:#393939;border-radius:8px;box-shadow:0 20px 28px -13px rgba(0,0,0,.25),0 44px 70px 6px rgba(0,0,0,.17),0 17px 85px 15px rgba(0,0,0,.15)"></div><div class="t" style="left:909.4px;top:667.2px;font-size:40.5px;line-height:40.5px;color:#ffffff;font-weight:400;">Edit Boolean Parameter</div><div class="r" style="left:909.3px;top:783.0px;width:476.3px;height:67.6px;background:transparent;border:2px solid #7a7a7a;border-radius:8px;box-sizing:border-box"></div><div class="r" style="left:926.4px;top:781.0px;width:170.1px;height:5.0px;background:#393939;"></div><div class="t" style="left:936.0px;top:773.6px;font-size:19.73px;line-height:19.73px;color:#c4c4c4;font-weight:400;">Parameter Name</div><div class="t" style="left:932.3px;top:804.5px;font-size:26.11px;line-height:26.11px;color:#ffffff;font-weight:400;">DIR_REVERSED</div><div class="r" style="left:1410.0px;top:812.0px;width:54.0px;height:20.0px;background:#66809a;border-radius:10px"></div><div class="r" style="left:1436.0px;top:806.0px;width:32.0px;height:32.0px;background:#90caf9;border-radius:50%;box-shadow:0 2px 2px -1px rgba(0,0,0,.3),0 1px 2px 0 rgba(0,0,0,.2)"></div><div class="t" style="left:1475.6px;top:808.7px;font-size:28.23px;line-height:28.23px;color:#ffffff;font-weight:400;">Enabled</div><div class="r" style="left:909.3px;top:910.0px;width:703.6px;height:133.0px;background:#4a4a4a;border-radius:8px"></div><div class="t" style="left:932.3px;top:947.0px;font-size:25.7px;line-height:25.7px;color:#c8c8c8;font-weight:400;">Current Value</div><div class="t" style="left:1276.4px;top:947.0px;font-size:25.7px;line-height:25.7px;color:#c8c8c8;font-weight:400;">Default Value</div><div class="t" style="left:932.3px;top:986.7px;font-size:26.82px;line-height:26.82px;color:#ffffff;font-weight:400;">Enabled</div><div class="t" style="left:1276.4px;top:986.7px;font-size:26.82px;line-height:26.82px;color:#ffffff;font-weight:400;">Disabled</div><div class="t" style="left:1394.4px;top:1116.4px;font-size:26.51px;line-height:26.51px;color:#ce93d8;font-weight:400;">Cancel</div><div class="t" style="left:1549.7px;top:1116.5px;font-size:26.41px;line-height:26.41px;color:#90caf9;font-weight:400;">Save</div><svg class="r" style="left:0.0px;top:1680.0px;" width="24.0" height="24.0" viewBox="0 0 24 24"><path d="M0 0v24h24A24 24 0 0 1 0 0z" fill="#c9c9c9"/></svg><svg class="r" style="left:2482.0px;top:1680.0px;" width="24.0" height="24.0" viewBox="0 0 24 24"><path d="M24 0v24H0A24 24 0 0 0 24 0z" fill="#c9c9c9"/></svg>
</body></html>
